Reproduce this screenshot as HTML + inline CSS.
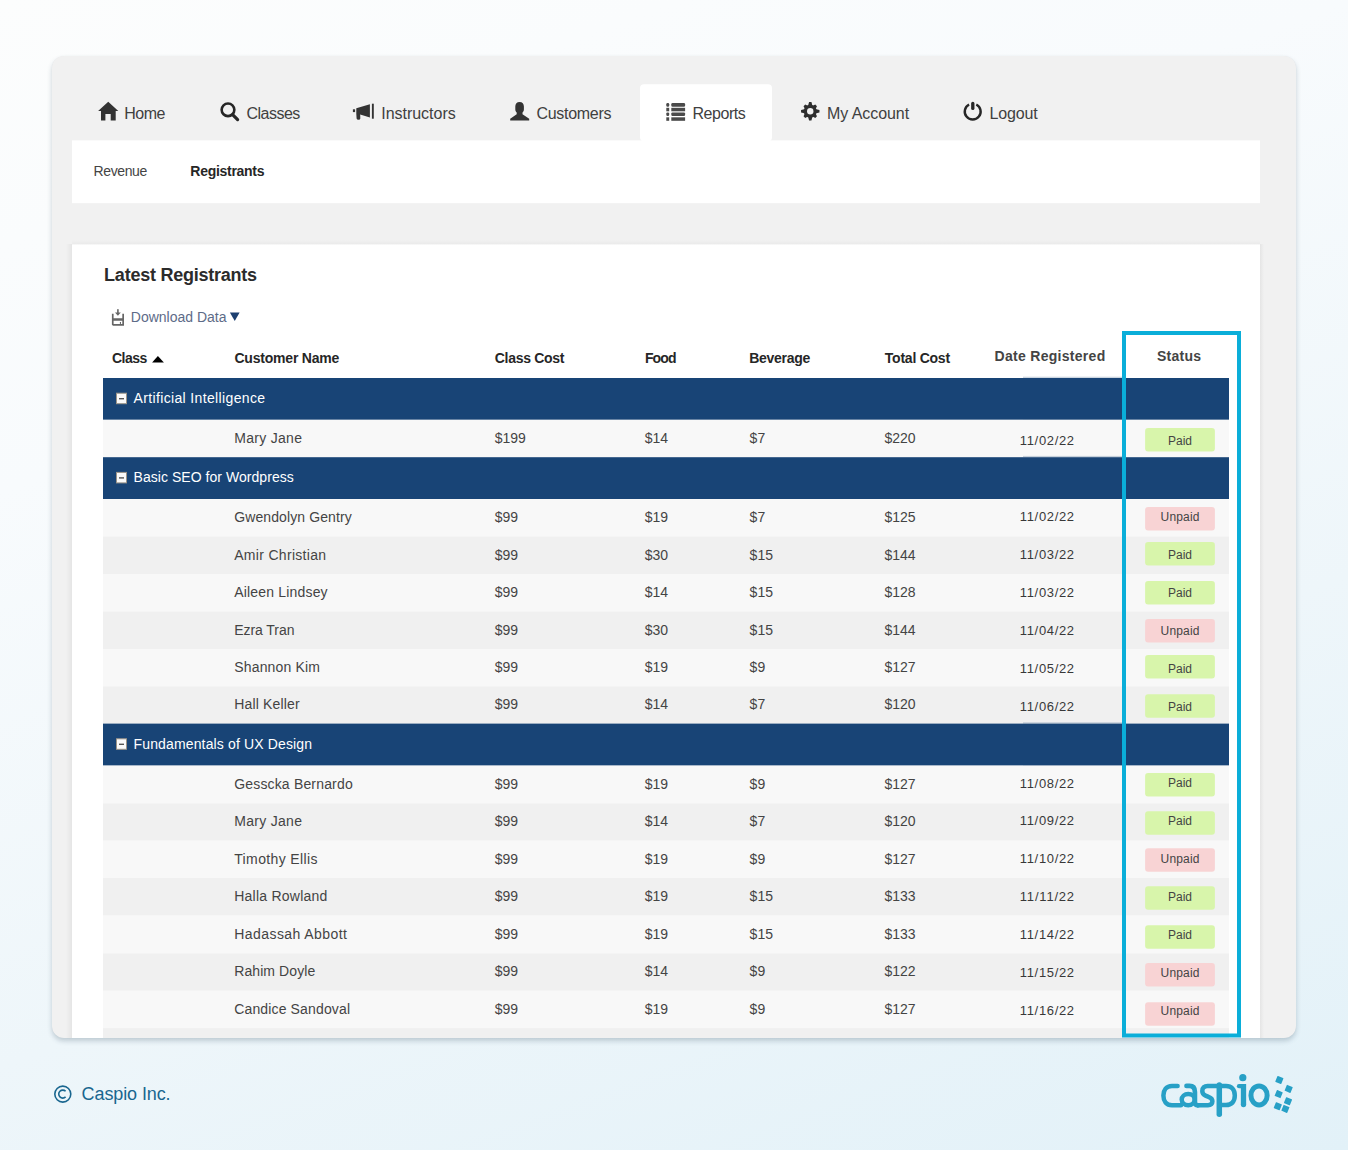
<!DOCTYPE html>
<html><head><meta charset="utf-8">
<style>
*{margin:0;padding:0;box-sizing:border-box}
html,body{width:1348px;height:1150px;overflow:hidden}
body{position:relative;background:linear-gradient(160deg,#fcfdfd 0%,#f8fbfd 30%,#eef6fa 65%,#e2f1f8 100%);}
.card{position:absolute;left:52px;top:56px;width:1244px;height:982px;background:#f1f1f1;border-radius:12px;
 box-shadow:0 3px 5px rgba(40,70,90,0.24),0 0 1px rgba(0,0,0,0.06)}
svg{position:absolute;left:0;top:0}
text{font-family:"Liberation Sans",sans-serif}
</style></head><body>
<div class="card"></div>
<svg width="1348" height="1150" viewBox="0 0 1348 1150">
<defs><clipPath id="cc"><rect x="52" y="56" width="1244" height="982" rx="12"/></clipPath></defs>
<g clip-path="url(#cc)">
<rect x="640" y="84.3" width="132" height="57" rx="4" fill="#fff"/>
<rect x="72" y="140.4" width="1188" height="62.8" fill="#fff"/>
<defs><linearGradient id="shl" x1="0" x2="1" y1="0" y2="0"><stop offset="0" stop-color="#000" stop-opacity="0"/><stop offset="1" stop-color="#000" stop-opacity="0.05"/></linearGradient>
<linearGradient id="sht" x1="0" x2="0" y1="0" y2="1"><stop offset="0" stop-color="#000" stop-opacity="0"/><stop offset="1" stop-color="#000" stop-opacity="0.03"/></linearGradient>
<linearGradient id="shr" x1="1" x2="0" y1="0" y2="0"><stop offset="0" stop-color="#000" stop-opacity="0"/><stop offset="1" stop-color="#000" stop-opacity="0.05"/></linearGradient></defs>
<rect x="66" y="244" width="6" height="800" fill="url(#shl)"/>
<rect x="1260" y="244" width="4" height="800" fill="url(#shr)"/>
<rect x="72" y="240" width="1188" height="4.5" fill="url(#sht)"/>
<rect x="72" y="244.5" width="1188" height="800" fill="#fff"/>
<rect x="103" y="378.00" width="1126" height="41.80" fill="#184476"/>
<rect x="116.5" y="393.20" width="10" height="10.5" fill="#fafafa" stroke="#9c9488" stroke-width="1"/>
<rect x="119" y="398.00" width="5" height="1.4" fill="#555"/>
<rect x="1023" y="376.70" width="100" height="1.3" fill="#184476" opacity="0.22"/>
<rect x="1023" y="419.80" width="100" height="1.3" fill="#184476" opacity="0.4"/>
<rect x="103" y="419.80" width="1126" height="37.40" fill="#f8f8f8"/>
<rect x="1145.1" y="428.1" width="69.8" height="23.5" rx="3" fill="#d8f5ab"/>
<rect x="103" y="457.20" width="1126" height="41.80" fill="#184476"/>
<rect x="116.5" y="472.40" width="10" height="10.5" fill="#fafafa" stroke="#9c9488" stroke-width="1"/>
<rect x="119" y="477.20" width="5" height="1.4" fill="#555"/>
<rect x="1023" y="455.90" width="100" height="1.3" fill="#184476" opacity="0.22"/>
<rect x="1023" y="499.00" width="100" height="1.3" fill="#184476" opacity="0.4"/>
<rect x="103" y="499.00" width="1126" height="37.50" fill="#f8f8f8"/>
<rect x="1145.1" y="506.9" width="69.8" height="23.5" rx="3" fill="#f8d3d4"/>
<rect x="103" y="536.50" width="1126" height="37.50" fill="#f0f0f0"/>
<rect x="1145.1" y="542.1" width="69.8" height="23.5" rx="3" fill="#d8f5ab"/>
<rect x="103" y="574.00" width="1126" height="37.50" fill="#f8f8f8"/>
<rect x="1145.1" y="581.1" width="69.8" height="23.5" rx="3" fill="#d8f5ab"/>
<rect x="103" y="611.50" width="1126" height="37.50" fill="#f0f0f0"/>
<rect x="1145.1" y="619.1" width="69.8" height="23.5" rx="3" fill="#f8d3d4"/>
<rect x="103" y="649.00" width="1126" height="37.30" fill="#f8f8f8"/>
<rect x="1145.1" y="655.1" width="69.8" height="23.5" rx="3" fill="#d8f5ab"/>
<rect x="103" y="686.30" width="1126" height="37.30" fill="#f0f0f0"/>
<rect x="1145.1" y="694.2" width="69.8" height="23.5" rx="3" fill="#d8f5ab"/>
<rect x="103" y="723.60" width="1126" height="42.00" fill="#184476"/>
<rect x="116.5" y="738.80" width="10" height="10.5" fill="#fafafa" stroke="#9c9488" stroke-width="1"/>
<rect x="119" y="743.60" width="5" height="1.4" fill="#555"/>
<rect x="1023" y="722.30" width="100" height="1.3" fill="#184476" opacity="0.22"/>
<rect x="1023" y="765.60" width="100" height="1.3" fill="#184476" opacity="0.4"/>
<rect x="103" y="765.60" width="1126" height="37.70" fill="#f8f8f8"/>
<rect x="1145.1" y="773.1" width="69.8" height="23.5" rx="3" fill="#d8f5ab"/>
<rect x="103" y="803.30" width="1126" height="37.40" fill="#f0f0f0"/>
<rect x="1145.1" y="811.2" width="69.8" height="23.5" rx="3" fill="#d8f5ab"/>
<rect x="103" y="840.70" width="1126" height="37.30" fill="#f8f8f8"/>
<rect x="1145.1" y="848.2" width="69.8" height="23.5" rx="3" fill="#f8d3d4"/>
<rect x="103" y="878.00" width="1126" height="37.60" fill="#f0f0f0"/>
<rect x="1145.1" y="886.3" width="69.8" height="23.5" rx="3" fill="#d8f5ab"/>
<rect x="103" y="915.60" width="1126" height="37.70" fill="#f8f8f8"/>
<rect x="1145.1" y="925.2" width="69.8" height="23.5" rx="3" fill="#d8f5ab"/>
<rect x="103" y="953.30" width="1126" height="37.50" fill="#f0f0f0"/>
<rect x="1145.1" y="963.1" width="69.8" height="23.5" rx="3" fill="#f8d3d4"/>
<rect x="103" y="990.80" width="1126" height="37.30" fill="#f8f8f8"/>
<rect x="1145.1" y="1002.3" width="69.8" height="23.5" rx="3" fill="#f8d3d4"/>
<rect x="103" y="1028.10" width="1126" height="37.50" fill="#f0f0f0"/>
</g>

<!-- home -->
<path d="M108.25 101.85 L118.3 111 L115.7 111 L115.7 120.6 L110.7 120.6 L110.7 113.9 L105.4 113.9 L105.4 120.6 L101 120.6 L101 111 L98.1 111 Z" fill="#333"/>
<!-- search -->
<circle cx="228" cy="109.8" r="6.35" fill="none" stroke="#262626" stroke-width="2.6"/>
<path d="M232.6 114.6 L237.6 119.6" stroke="#262626" stroke-width="3.2" stroke-linecap="round"/>
<!-- megaphone -->
<path d="M356.3 108.3 L369.9 104.2 L369.9 117.6 L360.2 114.6 L360.3 118.6 Q360.3 119.8 358.6 119.8 Q356.7 119.8 356.6 118.6 L356.3 113.8 Z" fill="#333"/>
<rect x="352.9" y="109.3" width="2.2" height="2.8" fill="#333"/>
<rect x="371.9" y="103.7" width="1.9" height="15" fill="#333"/>
<!-- user -->
<path d="M519.6 102.1 C522.4 102.1 523.9 104 523.9 106.6 L523.9 109.6 C523.9 111 523.2 112 522.5 112.6 L522.5 114.3 L529.2 118.8 L529.2 120.6 L510.2 120.6 L510.2 118.8 L516.7 114.3 L516.7 112.6 C516 112 515.3 111 515.3 109.6 L515.3 106.6 C515.3 104 516.8 102.1 519.6 102.1 Z" fill="#333"/>
<!-- list -->
<g fill="#4a4a4a">
<rect x="666.3" y="103.1" width="2.9" height="3.6" rx="1.2"/><rect x="671.3" y="103.1" width="13.8" height="3.6" rx="1.2"/>
<rect x="666.3" y="107.8" width="2.9" height="3.5"/><rect x="671.3" y="107.8" width="13.8" height="3.5"/>
<rect x="666.3" y="112.4" width="2.9" height="3.6" rx="1.2"/><rect x="671.3" y="112.4" width="13.8" height="3.6" rx="1.2"/>
<rect x="666.3" y="117.3" width="2.9" height="3.5"/><rect x="671.3" y="117.3" width="13.8" height="3.5"/>
</g>
<!-- gear -->
<g fill="#2e2e2e">
<path d="M812.55 106.20 L811.45 102.00 L809.05 102.00 L807.95 106.20 Z M815.41 109.29 L816.97 106.18 L815.27 104.48 L812.16 106.04 Z M815.25 113.50 L819.45 112.40 L819.45 110.00 L815.25 108.90 Z M812.16 116.36 L815.27 117.92 L816.97 116.22 L815.41 113.11 Z M807.95 116.20 L809.05 120.40 L811.45 120.40 L812.55 116.20 Z M805.09 113.11 L803.53 116.22 L805.23 117.92 L808.34 116.36 Z M805.25 108.90 L801.05 110.00 L801.05 112.40 L805.25 113.50 Z M808.34 106.04 L805.23 104.48 L803.53 106.18 L805.09 109.29 Z"/>
<circle cx="810.25" cy="111.2" r="6.4"/>
<circle cx="810.25" cy="111.2" r="3.2" fill="#f1f1f1"/>
</g>
<!-- power -->
<path d="M969.09 104.52 A7.95 7.95 0 1 0 976.31 104.52" fill="none" stroke="#262626" stroke-width="2.4"/>
<path d="M972.8 103.4 L972.8 108.4" stroke="#262626" stroke-width="3.3" stroke-linecap="round"/>
<!-- download icon -->
<g fill="#666">
<path d="M111.9 313.7 L113.6 313.7 L113.6 318.2 L122.3 318.2 L122.3 313.7 L124 313.7 L124 325.8 L113 325.8 L111.9 324.7 Z M113.6 320.7 L113.6 324.1 L122.3 324.1 L122.3 320.7 Z"/>
<rect x="119.9" y="322" width="1.1" height="1.9"/>
<rect x="117.1" y="309.2" width="1.6" height="4"/>
<path d="M115 312.6 L120.8 312.6 L117.9 315.8 Z"/>
</g>
<!-- download triangle -->
<path d="M229.9 312.4 L239.6 312.4 L234.75 321.1 Z" fill="#1c3f70"/>
<!-- sort triangle -->
<path d="M157.9 356 L163.9 362.5 L152.1 362.5 Z" fill="#000"/>
<!-- copyright symbol -->
<circle cx="62.8" cy="1094.1" r="8" fill="none" stroke="#19668f" stroke-width="1.6"/>
<path d="M65.6 1091.3 A4 4 0 1 0 65.6 1096.9" fill="none" stroke="#19668f" stroke-width="1.6"/>

<!-- caspio logo -->
<g fill="none" stroke="#27a0c6" stroke-width="4.5" stroke-linecap="butt">
<path d="M1177.6 1085.9 L1172 1085.9 C1166.3 1085.9 1163.4 1090 1163.4 1095.6 C1163.4 1101.2 1166.3 1105.3 1172 1105.3 L1181 1105.3" stroke-linecap="round"/>
<path d="M1186.5 1085.9 L1189.5 1085.9 C1193.5 1085.9 1194.9 1088.5 1194.9 1092 L1194.9 1102 C1194.9 1104 1196 1105.3 1198 1105.3" stroke-linecap="round" stroke-width="4.7"/>
<ellipse cx="1188.2" cy="1099.6" rx="6.5" ry="5.7"/>
<path d="M1197 1105.3 L1208 1105.3 C1211 1105.3 1212.4 1103.5 1212.4 1101.3 C1212.4 1099 1211 1097.8 1208.5 1096.9 L1205.5 1095.6 C1203.5 1094.8 1202.3 1093.5 1202.3 1091 C1202.3 1087.8 1204.5 1085.9 1207.5 1085.9 L1221 1085.9"/>
<path d="M1219.3 1085 L1219.3 1114.3" stroke-width="5.5" stroke-linecap="round"/>
<path d="M1219.3 1086.1 L1226 1086.1 C1231.5 1086.1 1234.8 1089.5 1234.8 1095.6 C1234.8 1101.7 1231.5 1105.05 1226 1105.05 L1219.3 1105.05"/>
<path d="M1243.5 1084 L1243.5 1104.5" stroke-width="5.3"/>
<path d="M1239 1086.2 L1243.5 1086.2" stroke-width="4.3" stroke-linecap="round"/>
<ellipse cx="1259.05" cy="1095.45" rx="8.1" ry="9.55" stroke-width="5"/>
</g>
<g fill="#27a0c6">
<circle cx="1243.5" cy="1104.5" r="2.65"/>
<circle cx="1242.8" cy="1077.7" r="3.6"/>
<rect x="-3.2" y="-3.2" width="6.4" height="6.4" rx="0.5" transform="translate(1279.35 1079.96) rotate(22)"/>
<rect x="-3.2" y="-3.2" width="6.4" height="6.4" rx="0.5" transform="translate(1288.7 1088.9) rotate(22)"/>
<rect x="-3.2" y="-3.2" width="6.4" height="6.4" rx="0.5" transform="translate(1278.7 1094.1) rotate(22)"/>
<rect x="-3.2" y="-3.2" width="6.4" height="6.4" rx="0.5" transform="translate(1288 1101.3) rotate(22)"/>
<rect x="-3.2" y="-3.2" width="6.4" height="6.4" rx="0.5" transform="translate(1277.8 1106.3) rotate(22)"/>
<rect x="-3.2" y="-3.2" width="6.4" height="6.4" rx="0.5" transform="translate(1285.4 1108.9) rotate(22)"/>
</g>
<text x="124.2" y="118.8" font-size="16" fill="#404040" textLength="41.3" lengthAdjust="spacing" >Home</text>
<text x="246.5" y="118.8" font-size="16" fill="#404040" textLength="53.8" lengthAdjust="spacing" >Classes</text>
<text x="381.2" y="118.8" font-size="16" fill="#404040" textLength="74.5" lengthAdjust="spacing" >Instructors</text>
<text x="536.5" y="118.8" font-size="16" fill="#404040" textLength="75.0" lengthAdjust="spacing" >Customers</text>
<text x="692.5" y="118.8" font-size="16" fill="#404040" textLength="53.3" lengthAdjust="spacing" >Reports</text>
<text x="827.1" y="118.8" font-size="16" fill="#404040" textLength="82.0" lengthAdjust="spacing" >My Account</text>
<text x="989.5" y="118.8" font-size="16" fill="#404040" textLength="48.2" lengthAdjust="spacing" >Logout</text>
<text x="93.6" y="175.8" font-size="14" fill="#444" textLength="53.7" lengthAdjust="spacing" >Revenue</text>
<text x="190.3" y="175.8" font-size="14" font-weight="bold" fill="#262626" textLength="74.2" lengthAdjust="spacing" >Registrants</text>
<text x="104.1" y="280.6" font-size="18" font-weight="bold" fill="#2b2b2b" textLength="153" lengthAdjust="spacing" >Latest Registrants</text>
<text x="130.8" y="321.9" font-size="14" fill="#5d6b88" textLength="95.7" lengthAdjust="spacing" >Download Data</text>
<text x="112" y="362.5" font-size="14" font-weight="bold" fill="#262626" textLength="35.4" lengthAdjust="spacing" >Class</text>
<text x="234.4" y="362.5" font-size="14" font-weight="bold" fill="#262626" textLength="105" lengthAdjust="spacing" >Customer Name</text>
<text x="494.8" y="362.5" font-size="14" font-weight="bold" fill="#262626" textLength="69.6" lengthAdjust="spacing" >Class Cost</text>
<text x="644.9" y="362.5" font-size="14" font-weight="bold" fill="#262626" textLength="31.7" lengthAdjust="spacing" >Food</text>
<text x="749.3" y="362.5" font-size="14" font-weight="bold" fill="#262626" textLength="61" lengthAdjust="spacing" >Beverage</text>
<text x="884.8" y="362.5" font-size="14" font-weight="bold" fill="#262626" textLength="65.3" lengthAdjust="spacing" >Total Cost</text>
<text x="994.6" y="360.8" font-size="14" font-weight="bold" fill="#444" textLength="110.6" lengthAdjust="spacing" >Date Registered</text>
<text x="1157" y="361.1" font-size="14" font-weight="bold" fill="#444" textLength="44" lengthAdjust="spacing" >Status</text>
<text x="133.5" y="403.0" font-size="14" fill="#fff" textLength="131.6" lengthAdjust="spacing" >Artificial Intelligence</text>
<text x="234.2" y="442.8" font-size="14" fill="#444" textLength="67.8" lengthAdjust="spacing" >Mary Jane</text>
<text x="494.7" y="442.8" font-size="14" fill="#444" >$199</text>
<text x="644.8" y="442.8" font-size="14" fill="#444" >$14</text>
<text x="749.6" y="442.8" font-size="14" fill="#444" >$7</text>
<text x="884.4" y="442.8" font-size="14" fill="#444" >$220</text>
<text x="1019.8" y="444.9" font-size="13" fill="#383838" textLength="54.3" lengthAdjust="spacing" >11/02/22</text>
<text x="1168.0" y="444.9" font-size="12" fill="#444" textLength="24" lengthAdjust="spacing" >Paid</text>
<text x="133.5" y="482.2" font-size="14" fill="#fff" textLength="160.3" lengthAdjust="spacing" >Basic SEO for Wordpress</text>
<text x="234.2" y="522.0" font-size="14" fill="#444" textLength="117.5" lengthAdjust="spacing" >Gwendolyn Gentry</text>
<text x="494.7" y="522.0" font-size="14" fill="#444" >$99</text>
<text x="644.8" y="522.0" font-size="14" fill="#444" >$19</text>
<text x="749.6" y="522.0" font-size="14" fill="#444" >$7</text>
<text x="884.4" y="522.0" font-size="14" fill="#444" >$125</text>
<text x="1019.8" y="521.0" font-size="13" fill="#383838" textLength="54.3" lengthAdjust="spacing" >11/02/22</text>
<text x="1160.6" y="520.9" font-size="12" fill="#444" textLength="38.8" lengthAdjust="spacing" >Unpaid</text>
<text x="234.2" y="559.5" font-size="14" fill="#444" textLength="91.9" lengthAdjust="spacing" >Amir Christian</text>
<text x="494.7" y="559.5" font-size="14" fill="#444" >$99</text>
<text x="644.8" y="559.5" font-size="14" fill="#444" >$30</text>
<text x="749.6" y="559.5" font-size="14" fill="#444" >$15</text>
<text x="884.4" y="559.5" font-size="14" fill="#444" >$144</text>
<text x="1019.8" y="559.0" font-size="13" fill="#383838" textLength="54.3" lengthAdjust="spacing" >11/03/22</text>
<text x="1168.0" y="558.8" font-size="12" fill="#444" textLength="24" lengthAdjust="spacing" >Paid</text>
<text x="234.2" y="597.0" font-size="14" fill="#444" textLength="93.4" lengthAdjust="spacing" >Aileen Lindsey</text>
<text x="494.7" y="597.0" font-size="14" fill="#444" >$99</text>
<text x="644.8" y="597.0" font-size="14" fill="#444" >$14</text>
<text x="749.6" y="597.0" font-size="14" fill="#444" >$15</text>
<text x="884.4" y="597.0" font-size="14" fill="#444" >$128</text>
<text x="1019.8" y="597.2" font-size="13" fill="#383838" textLength="54.3" lengthAdjust="spacing" >11/03/22</text>
<text x="1168.0" y="597.1" font-size="12" fill="#444" textLength="24" lengthAdjust="spacing" >Paid</text>
<text x="234.2" y="634.5" font-size="14" fill="#444" textLength="60.3" lengthAdjust="spacing" >Ezra Tran</text>
<text x="494.7" y="634.5" font-size="14" fill="#444" >$99</text>
<text x="644.8" y="634.5" font-size="14" fill="#444" >$30</text>
<text x="749.6" y="634.5" font-size="14" fill="#444" >$15</text>
<text x="884.4" y="634.5" font-size="14" fill="#444" >$144</text>
<text x="1019.8" y="635.0" font-size="13" fill="#383838" textLength="54.3" lengthAdjust="spacing" >11/04/22</text>
<text x="1160.6" y="634.7" font-size="12" fill="#444" textLength="38.8" lengthAdjust="spacing" >Unpaid</text>
<text x="234.2" y="672.0" font-size="14" fill="#444" textLength="85.8" lengthAdjust="spacing" >Shannon Kim</text>
<text x="494.7" y="672.0" font-size="14" fill="#444" >$99</text>
<text x="644.8" y="672.0" font-size="14" fill="#444" >$19</text>
<text x="749.6" y="672.0" font-size="14" fill="#444" >$9</text>
<text x="884.4" y="672.0" font-size="14" fill="#444" >$127</text>
<text x="1019.8" y="672.8" font-size="13" fill="#383838" textLength="54.3" lengthAdjust="spacing" >11/05/22</text>
<text x="1168.0" y="672.7" font-size="12" fill="#444" textLength="24" lengthAdjust="spacing" >Paid</text>
<text x="234.2" y="709.3" font-size="14" fill="#444" textLength="65.4" lengthAdjust="spacing" >Hall Keller</text>
<text x="494.7" y="709.3" font-size="14" fill="#444" >$99</text>
<text x="644.8" y="709.3" font-size="14" fill="#444" >$14</text>
<text x="749.6" y="709.3" font-size="14" fill="#444" >$7</text>
<text x="884.4" y="709.3" font-size="14" fill="#444" >$120</text>
<text x="1019.8" y="710.6" font-size="13" fill="#383838" textLength="54.3" lengthAdjust="spacing" >11/06/22</text>
<text x="1168.0" y="710.9" font-size="12" fill="#444" textLength="24" lengthAdjust="spacing" >Paid</text>
<text x="133.5" y="748.6" font-size="14" fill="#fff" textLength="178.6" lengthAdjust="spacing" >Fundamentals of UX Design</text>
<text x="234.2" y="788.6" font-size="14" fill="#444" textLength="118.5" lengthAdjust="spacing" >Gesscka Bernardo</text>
<text x="494.7" y="788.6" font-size="14" fill="#444" >$99</text>
<text x="644.8" y="788.6" font-size="14" fill="#444" >$19</text>
<text x="749.6" y="788.6" font-size="14" fill="#444" >$9</text>
<text x="884.4" y="788.6" font-size="14" fill="#444" >$127</text>
<text x="1019.8" y="787.5" font-size="13" fill="#383838" textLength="54.3" lengthAdjust="spacing" >11/08/22</text>
<text x="1168.0" y="787.0" font-size="12" fill="#444" textLength="24" lengthAdjust="spacing" >Paid</text>
<text x="234.2" y="826.3" font-size="14" fill="#444" textLength="67.8" lengthAdjust="spacing" >Mary Jane</text>
<text x="494.7" y="826.3" font-size="14" fill="#444" >$99</text>
<text x="644.8" y="826.3" font-size="14" fill="#444" >$14</text>
<text x="749.6" y="826.3" font-size="14" fill="#444" >$7</text>
<text x="884.4" y="826.3" font-size="14" fill="#444" >$120</text>
<text x="1019.8" y="825.3" font-size="13" fill="#383838" textLength="54.3" lengthAdjust="spacing" >11/09/22</text>
<text x="1168.0" y="824.8" font-size="12" fill="#444" textLength="24" lengthAdjust="spacing" >Paid</text>
<text x="234.2" y="863.7" font-size="14" fill="#444" textLength="83.3" lengthAdjust="spacing" >Timothy Ellis</text>
<text x="494.7" y="863.7" font-size="14" fill="#444" >$99</text>
<text x="644.8" y="863.7" font-size="14" fill="#444" >$19</text>
<text x="749.6" y="863.7" font-size="14" fill="#444" >$9</text>
<text x="884.4" y="863.7" font-size="14" fill="#444" >$127</text>
<text x="1019.8" y="863.3" font-size="13" fill="#383838" textLength="54.3" lengthAdjust="spacing" >11/10/22</text>
<text x="1160.6" y="863.0" font-size="12" fill="#444" textLength="38.8" lengthAdjust="spacing" >Unpaid</text>
<text x="234.2" y="901.0" font-size="14" fill="#444" textLength="93.2" lengthAdjust="spacing" >Halla Rowland</text>
<text x="494.7" y="901.0" font-size="14" fill="#444" >$99</text>
<text x="644.8" y="901.0" font-size="14" fill="#444" >$19</text>
<text x="749.6" y="901.0" font-size="14" fill="#444" >$15</text>
<text x="884.4" y="901.0" font-size="14" fill="#444" >$133</text>
<text x="1019.8" y="901.0" font-size="13" fill="#383838" textLength="54.3" lengthAdjust="spacing" >11/11/22</text>
<text x="1168.0" y="900.8" font-size="12" fill="#444" textLength="24" lengthAdjust="spacing" >Paid</text>
<text x="234.2" y="938.6" font-size="14" fill="#444" textLength="112.8" lengthAdjust="spacing" >Hadassah Abbott</text>
<text x="494.7" y="938.6" font-size="14" fill="#444" >$99</text>
<text x="644.8" y="938.6" font-size="14" fill="#444" >$19</text>
<text x="749.6" y="938.6" font-size="14" fill="#444" >$15</text>
<text x="884.4" y="938.6" font-size="14" fill="#444" >$133</text>
<text x="1019.8" y="939.3" font-size="13" fill="#383838" textLength="54.3" lengthAdjust="spacing" >11/14/22</text>
<text x="1168.0" y="938.6" font-size="12" fill="#444" textLength="24" lengthAdjust="spacing" >Paid</text>
<text x="234.2" y="976.3" font-size="14" fill="#444" textLength="81" lengthAdjust="spacing" >Rahim Doyle</text>
<text x="494.7" y="976.3" font-size="14" fill="#444" >$99</text>
<text x="644.8" y="976.3" font-size="14" fill="#444" >$14</text>
<text x="749.6" y="976.3" font-size="14" fill="#444" >$9</text>
<text x="884.4" y="976.3" font-size="14" fill="#444" >$122</text>
<text x="1019.8" y="977.1" font-size="13" fill="#383838" textLength="54.3" lengthAdjust="spacing" >11/15/22</text>
<text x="1160.6" y="976.7" font-size="12" fill="#444" textLength="38.8" lengthAdjust="spacing" >Unpaid</text>
<text x="234.2" y="1013.8" font-size="14" fill="#444" textLength="115.8" lengthAdjust="spacing" >Candice Sandoval</text>
<text x="494.7" y="1013.8" font-size="14" fill="#444" >$99</text>
<text x="644.8" y="1013.8" font-size="14" fill="#444" >$19</text>
<text x="749.6" y="1013.8" font-size="14" fill="#444" >$9</text>
<text x="884.4" y="1013.8" font-size="14" fill="#444" >$127</text>
<text x="1019.8" y="1015.4" font-size="13" fill="#383838" textLength="54.3" lengthAdjust="spacing" >11/16/22</text>
<text x="1160.6" y="1014.7" font-size="12" fill="#444" textLength="38.8" lengthAdjust="spacing" >Unpaid</text>
<rect x="1124" y="333" width="115" height="702.5" fill="none" stroke="#0aaed9" stroke-width="4"/>
<text x="81.6" y="1100.4" font-size="18" fill="#19668f" textLength="89" lengthAdjust="spacing">Caspio Inc.</text>
</svg>
</body></html>
